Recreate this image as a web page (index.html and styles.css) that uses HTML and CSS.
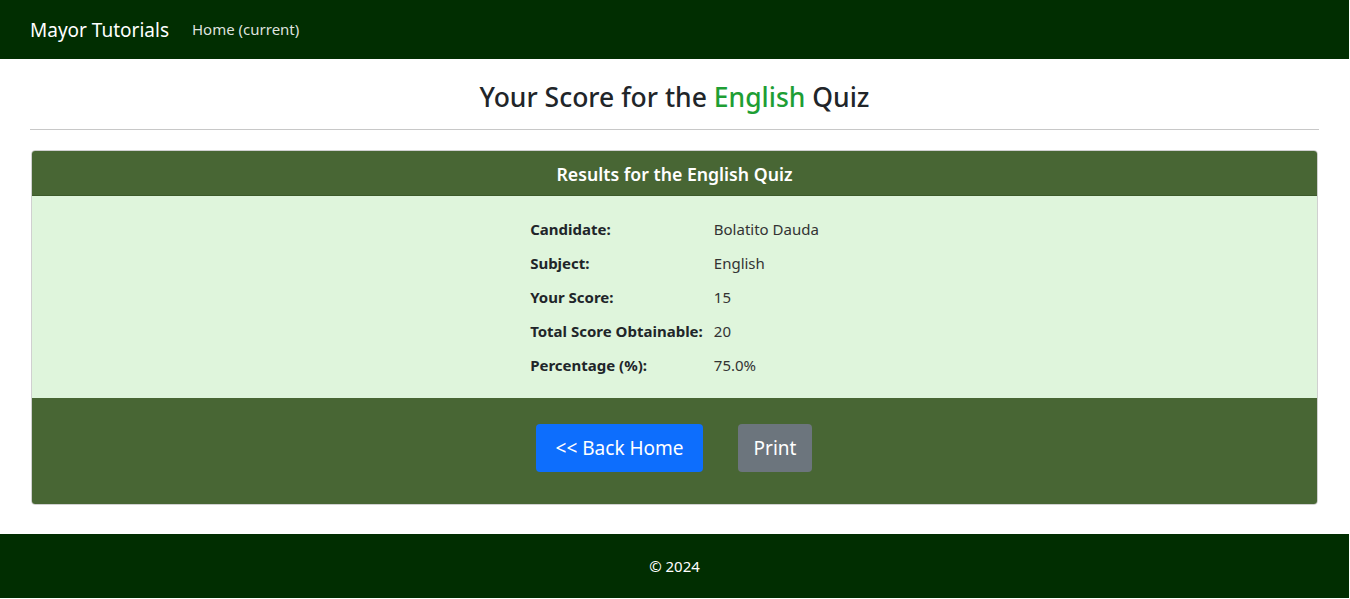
FILE: index.html
```html
<!DOCTYPE html>
<html lang="en">
<head>
<meta charset="utf-8">
<title>Quiz Result</title>
<link rel="stylesheet" href="styles.css">
</head>
<body>
<nav class="navbar">
  <a class="brand" href="#">Mayor Tutorials</a>
  <a class="nav-link" href="#">Home (current)</a>
</nav>
<main class="container">
  <h3 class="title">Your Score for the <span class="subject">English</span> Quiz</h3>
  <hr class="divider">
  <section class="card">
    <div class="card-header">Results for the English Quiz</div>
    <div class="card-body">
      <table class="results">
        <tr><th>Candidate:</th><td>Bolatito Dauda</td></tr>
        <tr><th>Subject:</th><td>English</td></tr>
        <tr><th>Your Score:</th><td>15</td></tr>
        <tr><th>Total Score Obtainable:</th><td>20</td></tr>
        <tr><th>Percentage (%):</th><td>75.0%</td></tr>
      </table>
    </div>
    <div class="card-footer">
      <a class="btn btn-primary" href="#">&lt;&lt; Back Home</a>
      <button class="btn btn-secondary" type="button">Print</button>
    </div>
  </section>
</main>
<footer class="footer">© 2024</footer>
</body>
</html>
```
FILE: styles.css
```css
* { box-sizing: border-box; }
html, body { margin: 0; padding: 0; }
body {
  font-family: "Noto Sans", "Open Sans", sans-serif;
  font-size: 16px;
  color: #212529;
  background: #fff;
  width: 1349px;
}
a { text-decoration: none; }
.navbar {
  height: 59px;
  background: #012e01;
  display: flex;
  align-items: center;
  padding: 0 30px;
}
.brand {
  color: #fff;
  font-size: 19px;
  margin-right: 23px;
  margin-top: 1px;
}
.nav-link {
  color: rgba(255,255,255,0.88);
  font-size: 15px;
  margin-top: -1px;
}
.container {
  padding: 20px 30px 29px;
}
.title {
  margin: 0;
  text-align: center;
  font-size: 26.5px;
  font-weight: 500;
  line-height: 36px;
  height: 36px;
}
.subject { color: #1e9e34; }
.divider {
  margin: 14px 0 20px;
  border: 0;
  border-top: 1px solid #c8c8c8;
}
.card {
  margin: 0 1px;
  border: 1px solid #d0d0d0;
  border-radius: 4px;
  overflow: hidden;
}
.card-header {
  background: #486634;
  color: #fff;
  font-weight: 600;
  font-size: 17.7px;
  text-align: center;
  height: 45px;
  line-height: 46px;
  border-bottom: 1px solid #3d5a2b;
}
.card-body {
  background: #dff5dc;
  padding: 16px 0;
  display: flex;
  justify-content: center;
}
.results {
  border-collapse: collapse;
  font-size: 15px;
}
.results th {
  text-align: left;
  font-weight: 700;
  padding: 0 11px 0 0;
  height: 34px;
  white-space: nowrap;
}
.results td {
  padding: 0;
  height: 34px;
  color: #333;
}
.card-footer {
  background: #486634;
  height: 106px;
  display: flex;
  justify-content: center;
  align-items: flex-start;
  gap: 35px;
  padding-top: 26px;
  padding-right: 1px;
}
.btn {
  font-family: inherit;
  font-size: 19px;
  color: #fff;
  border: 0;
  border-radius: 4px;
  height: 48px;
  display: inline-flex;
  align-items: center;
  cursor: pointer;
}
.btn-primary { background: #0d6efd; padding: 0 19px 0 20px; }
.btn-secondary { background: #6c757d; padding: 0 16px; }
.footer {
  background: #012e01;
  color: #fff;
  text-align: center;
  height: 64px;
  line-height: 64px;
  font-size: 15px;
}
```
